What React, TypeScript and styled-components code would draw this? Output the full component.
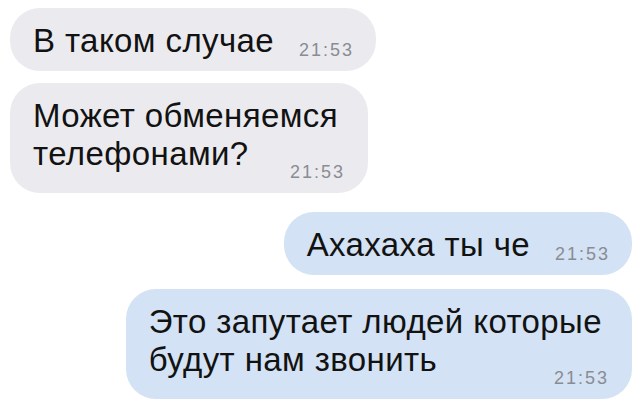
import styled, { createGlobalStyle } from "styled-components";

interface IMessage {
  lines: string[];
  time: string;
  outgoing: boolean;
  gapTop: number;
}

const messages: IMessage[] = [
  { lines: ["В таком случае"], time: "21:53", outgoing: false, gapTop: 8 },
  { lines: ["Может обменяемся", "телефонами?"], time: "21:53", outgoing: false, gapTop: 12 },
  { lines: ["Ахахаха ты че"], time: "21:53", outgoing: true, gapTop: 19 },
  {
    lines: ["Это запутает людей которые", "будут нам звонить"],
    time: "21:53",
    outgoing: true,
    gapTop: 14,
  },
];

const App: React.FC = () => {
  return (
    <>
      <GlobalStyle />
      <Chat>
        {messages.map((msg, i) => {
          const multiline = msg.lines.length > 1;
          return (
            <Bubble
              key={i}
              $outgoing={msg.outgoing}
              $gapTop={msg.gapTop}
              $multiline={multiline}
            >
              <Body $multiline={multiline}>
                {msg.lines.map((line, j) => (
                  <Line key={j}>
                    {line}
                    {j === msg.lines.length - 1 && <TimeSpacer />}
                  </Line>
                ))}
              </Body>
              <Time $multiline={multiline}>{msg.time}</Time>
            </Bubble>
          );
        })}
      </Chat>
    </>
  );
};

const GlobalStyle = createGlobalStyle`
  html, body {
    margin: 0;
    padding: 0;
    background: #ffffff;
  }
  body {
    font-family: "Liberation Sans", Arial, sans-serif;
    -webkit-font-smoothing: antialiased;
  }
`;

const Chat = styled.div`
  display: flex;
  flex-direction: column;
  width: 640px;
  height: 409px;
  box-sizing: border-box;
  padding: 0 8px 0 10px;
  overflow: hidden;
`;

const Bubble = styled.div<{ $outgoing: boolean; $gapTop: number; $multiline: boolean }>`
  display: grid;
  align-self: ${(p) => (p.$outgoing ? "flex-end" : "flex-start")};
  margin-top: ${(p) => p.$gapTop}px;
  padding: 14px ${(p) => (p.$multiline ? 30 : 24)}px 11px 23px;
  border-radius: 30px;
  background: ${(p) => (p.$outgoing ? "#d3e2f4" : "#ebebef")};
  color: #121212;
`;

// the last line keeps room for the time stamp, which sits in the same grid cell
const Body = styled.div<{ $multiline: boolean }>`
  grid-area: 1 / 1;
  padding-bottom: ${(p) => (p.$multiline ? 9 : 0)}px;
  font-size: 33px;
  line-height: 38px;
  letter-spacing: 0.4px;
  white-space: nowrap;
`;

const Line = styled.div``;

const TimeSpacer = styled.span`
  display: inline-block;
  width: 78px;
`;

const Time = styled.span<{ $multiline: boolean }>`
  grid-area: 1 / 1;
  align-self: end;
  justify-self: end;
  margin-right: ${(p) => (p.$multiline ? -7 : -2)}px;
  font-size: 18px;
  line-height: 20px;
  letter-spacing: 2px;
  color: #8a8c93;
`;

export default App;
